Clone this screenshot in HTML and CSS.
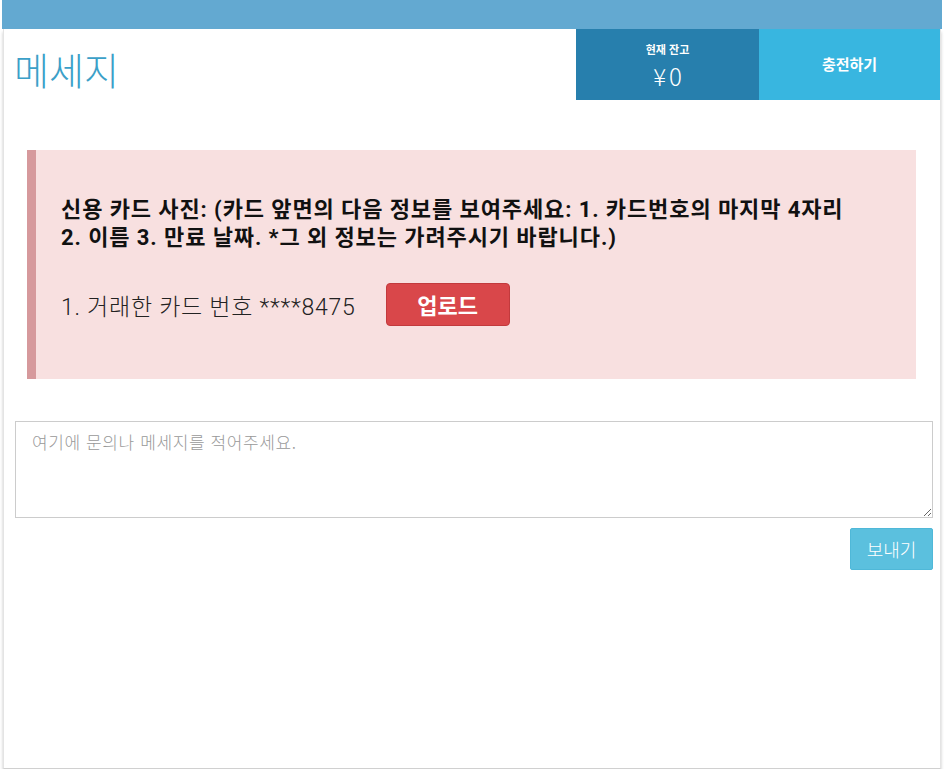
FILE: index.html
```html
<!DOCTYPE html>
<html lang="ko">
<head>
<meta charset="utf-8">
<title>메세지</title>
<link rel="stylesheet" href="styles.css">
</head>
<body>
<div class="page">
  <div class="topbar"></div>
  <div class="panel">
    <header class="head">
      <h1 class="title">메세지</h1>
      <div class="balance">
        <div class="balance-label">현재 잔고</div>
        <div class="balance-value">¥0</div>
      </div>
      <div class="charge">충전하기</div>
    </header>
    <div class="alert">
      <p class="alert-title">신용 카드 사진: (카드 앞면의 다음 정보를 보여주세요: 1. 카드번호의 마지막 4자리<br>2. 이름 3. 만료 날짜. *그 외 정보는 가려주시기 바랍니다.)</p>
      <div class="alert-row">
        <span class="card-num">1. 거래한 카드 번호 ****8475</span>
        <button class="upload">업로드</button>
      </div>
    </div>
    <div class="form">
      <textarea class="msg" placeholder="여기에 문의나 메세지를 적어주세요."></textarea>
      <div class="actions">
        <button class="send">보내기</button>
      </div>
    </div>
  </div>
</div>
</body>
</html>
```

FILE: styles.css
```css
* { box-sizing: border-box; }
html, body { margin: 0; padding: 0; background: #ffffff; }
body {
  font-family: "Roboto", "Noto Sans CJK KR", sans-serif;
  color: #111;
}
.page {
  width: 940px;
  margin-left: 2px;
}
.topbar {
  height: 29px;
  background: #63a9d1;
}
.panel {
  margin: 0 1px;
  height: 740px;
  border-left: 1px solid #e4e4e4;
  border-right: 1px solid #e4e4e4;
  border-bottom: 1px solid #d0d0d0;
  box-shadow: 0 3px 3px rgba(0,0,0,0.22);
  background: #fff;
}
.head {
  display: flex;
  height: 71px;
}
.title {
  flex: 1;
  margin: 0;
  padding-left: 10px;
  font-family: "Noto Sans CJK KR", sans-serif;
  font-weight: 300;
  font-size: 38px;
  line-height: 80px;
  color: #3ba0c8;
}
.balance {
  width: 183px;
  background: #277fad;
  color: #fff;
  display: flex;
  flex-direction: column;
  align-items: center;
  padding-top: 12px;
}
.balance-label {
  font-family: "Noto Sans CJK KR", sans-serif;
  font-size: 11px;
  font-weight: 700;
  line-height: 16px;
}
.balance-value {
  font-family: "Noto Sans CJK KR", sans-serif;
  font-size: 24px;
  font-weight: 300;
  letter-spacing: 3px;
  line-height: 30px;
  margin-top: 4px;
  padding-left: 3px;
}
.charge {
  width: 181px;
  background: #38b6e0;
  color: #fff;
  font-family: "Noto Sans CJK KR", sans-serif;
  font-weight: 700;
  font-size: 15px;
  display: flex;
  align-items: center;
  justify-content: center;
  padding-bottom: 2px;
}
.alert {
  margin: 50px 24px 0 23px;
  background: #f8e0e0;
  border-left: 9px solid #d6999c;
  padding: 46px 10px 53px 25px;
}
.alert-title {
  margin: 0;
  font-size: 22px;
  font-weight: 700;
  letter-spacing: 0.9px;
  line-height: 28px;
  color: #111;
  white-space: nowrap;
}
.alert-row {
  display: flex;
  align-items: center;
  gap: 30px;
  margin-top: 31px;
}
.card-num {
  font-size: 23px;
  font-weight: 300;
  letter-spacing: 0.75px;
  color: #222;
}
.upload {
  width: 124px;
  height: 43px;
  border: 1px solid #c23a3d;
  border-radius: 4px;
  background: #d9474a;
  color: #fff;
  font-family: "Noto Sans CJK KR", sans-serif;
  font-size: 22px;
  font-weight: 700;
  padding: 0 0 2px;
}
.form {
  padding: 42px 7px 0 11px;
}
.msg {
  display: block;
  width: 100%;
  height: 97px;
  border: 1px solid #cccccc;
  border-radius: 0;
  padding: 7px 16px;
  font-family: "Noto Sans CJK KR", sans-serif;
  font-size: 17px;
  font-weight: 300;
  letter-spacing: 0.6px;
  resize: vertical;
  outline: none;
}
.msg::placeholder { color: #999; }
.actions {
  display: flex;
  justify-content: flex-end;
  margin-top: 10px;
}
.send {
  width: 83px;
  height: 42px;
  border: 1px solid #4fb8d8;
  border-radius: 2px;
  background: #5bc0de;
  color: #fff;
  font-family: "Noto Sans CJK KR", sans-serif;
  font-size: 18px;
  font-weight: 300;
  padding: 0;
}
```
